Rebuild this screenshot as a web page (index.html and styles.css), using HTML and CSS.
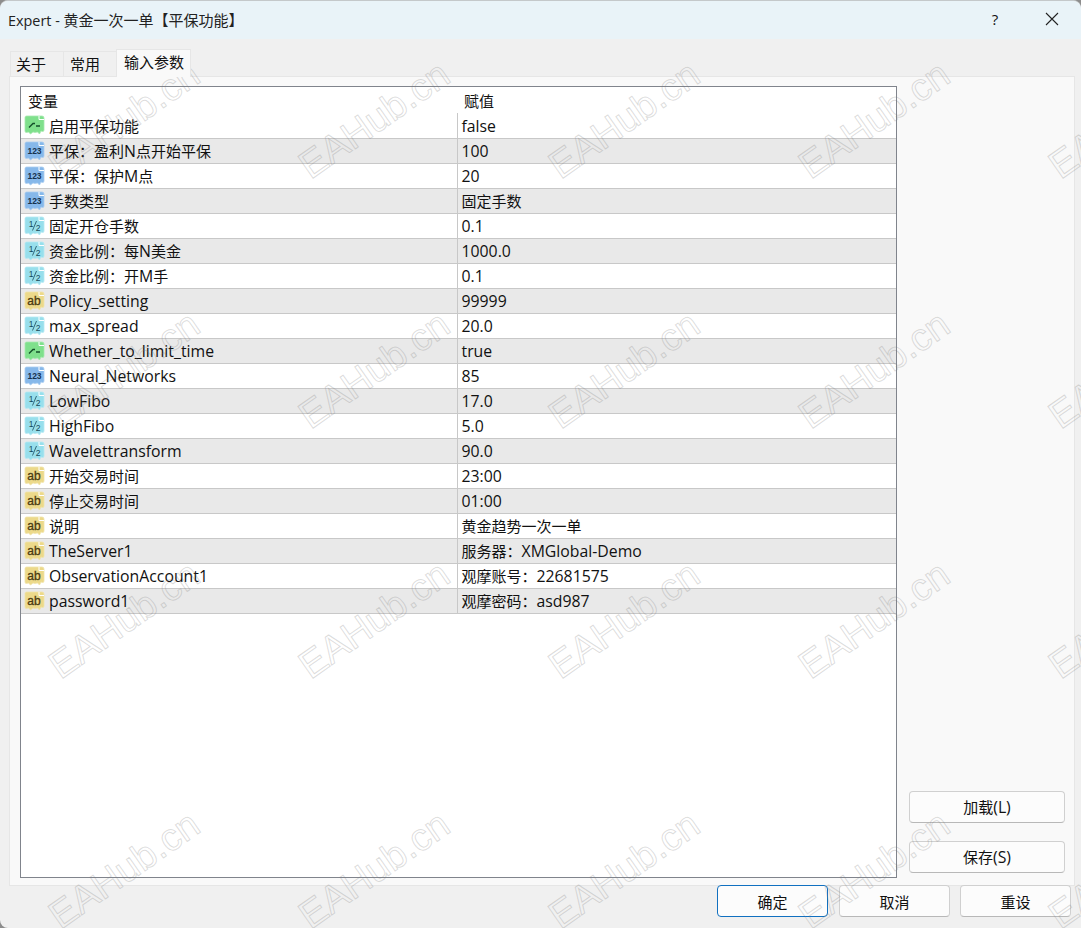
FILE: index.html
```html
<!DOCTYPE html>
<html lang="zh-CN">

<head>
  <meta charset="UTF-8">
  <title>Expert - 黄金一次一单【平保功能】</title>
  <link rel="stylesheet" href="styles.css">
</head>

<body>
  <svg class="defs" width="0" height="0">
    <defs>
      <path id="doc" d="M1 2.500 Q1 1 2.500 1 H14 L18 1 Q20 1 20 3 V15 Q20 16.500 18.500 16.500 L17 16 L15.500 19 L13.500 17 L11 17.500 L9 17 L6.500 19 L4.500 17 L2.500 17.500 Q1 17.500 1 16 Z"/>
      <path id="fold" d="M15 1 V4.500 H20"/>
      <g id="half">
        <text class="hf" x="7" y="10.500">1</text>
        <path d="M8.500 14.500 L12.500 5" stroke="#164a5a" stroke-width="0.8" fill="none"/>
        <text class="hf" x="14" y="14.500">2</text>
      </g>
    </defs>
  </svg>

  <div class="window">
    <div class="titlebar">
      <span class="title"><span class="title-en">Expert - </span>黄金一次一单【平保功能】</span>
      <span class="help">?</span>
      <svg class="close" width="14" height="14" viewBox="0 0 14 14"><path d="M1 1 L13 13 M13 1 L1 13" stroke="#222" stroke-width="1.1" fill="none"/></svg>
    </div>

    <div class="tabs">
      <div class="tab">关于</div>
      <div class="tab">常用</div>
      <div class="tab tab-on">输入参数</div>
    </div>

    <div class="panel">
      <div class="grid-box">
        <table class="params">
          <thead>
            <tr><th class="c1">变量</th><th class="c2">赋值</th></tr>
          </thead>
          <tbody>
            <tr><td class="c1"><div class="name"><svg class="ico ico-bool" viewBox="0 0 21 20"><use href="#doc"/><use class="fold" href="#fold"/><path class="sw" d="M5 12.500 L9 8.500 L11 8.500 M12 11 H16"/></svg><span>启用平保功能</span></div></td><td class="c2 en">false</td></tr>
            <tr><td class="c1"><div class="name"><svg class="ico ico-int" viewBox="0 0 21 20"><use href="#doc"/><use class="fold" href="#fold"/><text x="10.500" y="13">123</text></svg><span>平保：盈利<span class="en">N</span>点开始平保</span></div></td><td class="c2 en">100</td></tr>
            <tr><td class="c1"><div class="name"><svg class="ico ico-int" viewBox="0 0 21 20"><use href="#doc"/><use class="fold" href="#fold"/><text x="10.500" y="13">123</text></svg><span>平保：保护<span class="en">M</span>点</span></div></td><td class="c2 en">20</td></tr>
            <tr><td class="c1"><div class="name"><svg class="ico ico-int" viewBox="0 0 21 20"><use href="#doc"/><use class="fold" href="#fold"/><text x="10.500" y="13">123</text></svg><span>手数类型</span></div></td><td class="c2 zh">固定手数</td></tr>
            <tr><td class="c1"><div class="name"><svg class="ico ico-dbl" viewBox="0 0 21 20"><use href="#doc"/><use class="fold" href="#fold"/><use href="#half"/></svg><span>固定开仓手数</span></div></td><td class="c2 en">0.1</td></tr>
            <tr><td class="c1"><div class="name"><svg class="ico ico-dbl" viewBox="0 0 21 20"><use href="#doc"/><use class="fold" href="#fold"/><use href="#half"/></svg><span>资金比例：每<span class="en">N</span>美金</span></div></td><td class="c2 en">1000.0</td></tr>
            <tr><td class="c1"><div class="name"><svg class="ico ico-dbl" viewBox="0 0 21 20"><use href="#doc"/><use class="fold" href="#fold"/><use href="#half"/></svg><span>资金比例：开<span class="en">M</span>手</span></div></td><td class="c2 en">0.1</td></tr>
            <tr><td class="c1"><div class="name en"><svg class="ico ico-str" viewBox="0 0 21 20"><use href="#doc"/><use class="fold" href="#fold"/><text x="10" y="14">ab</text></svg><span>Policy_setting</span></div></td><td class="c2 en">99999</td></tr>
            <tr><td class="c1"><div class="name en"><svg class="ico ico-dbl" viewBox="0 0 21 20"><use href="#doc"/><use class="fold" href="#fold"/><use href="#half"/></svg><span>max_spread</span></div></td><td class="c2 en">20.0</td></tr>
            <tr><td class="c1"><div class="name en"><svg class="ico ico-bool" viewBox="0 0 21 20"><use href="#doc"/><use class="fold" href="#fold"/><path class="sw" d="M5 12.500 L9 8.500 L11 8.500 M12 11 H16"/></svg><span>Whether_to_limit_time</span></div></td><td class="c2 en">true</td></tr>
            <tr><td class="c1"><div class="name en"><svg class="ico ico-int" viewBox="0 0 21 20"><use href="#doc"/><use class="fold" href="#fold"/><text x="10.500" y="13">123</text></svg><span>Neural_Networks</span></div></td><td class="c2 en">85</td></tr>
            <tr><td class="c1"><div class="name en"><svg class="ico ico-dbl" viewBox="0 0 21 20"><use href="#doc"/><use class="fold" href="#fold"/><use href="#half"/></svg><span>LowFibo</span></div></td><td class="c2 en">17.0</td></tr>
            <tr><td class="c1"><div class="name en"><svg class="ico ico-dbl" viewBox="0 0 21 20"><use href="#doc"/><use class="fold" href="#fold"/><use href="#half"/></svg><span>HighFibo</span></div></td><td class="c2 en">5.0</td></tr>
            <tr><td class="c1"><div class="name en"><svg class="ico ico-dbl" viewBox="0 0 21 20"><use href="#doc"/><use class="fold" href="#fold"/><use href="#half"/></svg><span>Wavelettransform</span></div></td><td class="c2 en">90.0</td></tr>
            <tr><td class="c1"><div class="name"><svg class="ico ico-str" viewBox="0 0 21 20"><use href="#doc"/><use class="fold" href="#fold"/><text x="10" y="14">ab</text></svg><span>开始交易时间</span></div></td><td class="c2 en">23:00</td></tr>
            <tr><td class="c1"><div class="name"><svg class="ico ico-str" viewBox="0 0 21 20"><use href="#doc"/><use class="fold" href="#fold"/><text x="10" y="14">ab</text></svg><span>停止交易时间</span></div></td><td class="c2 en">01:00</td></tr>
            <tr><td class="c1"><div class="name"><svg class="ico ico-str" viewBox="0 0 21 20"><use href="#doc"/><use class="fold" href="#fold"/><text x="10" y="14">ab</text></svg><span>说明</span></div></td><td class="c2 zh">黄金趋势一次一单</td></tr>
            <tr><td class="c1"><div class="name en"><svg class="ico ico-str" viewBox="0 0 21 20"><use href="#doc"/><use class="fold" href="#fold"/><text x="10" y="14">ab</text></svg><span>TheServer1</span></div></td><td class="c2">服务器：<span class="en">XMGlobal-Demo</span></td></tr>
            <tr><td class="c1"><div class="name en"><svg class="ico ico-str" viewBox="0 0 21 20"><use href="#doc"/><use class="fold" href="#fold"/><text x="10" y="14">ab</text></svg><span>ObservationAccount1</span></div></td><td class="c2">观摩账号：<span class="en">22681575</span></td></tr>
            <tr><td class="c1"><div class="name en"><svg class="ico ico-str" viewBox="0 0 21 20"><use href="#doc"/><use class="fold" href="#fold"/><text x="10" y="14">ab</text></svg><span>password1</span></div></td><td class="c2">观摩密码：<span class="en">asd987</span></td></tr>
          </tbody>
        </table>
      </div>
      <div class="side">
        <button class="btn btn-side">加载<span class="en">(L)</span></button>
        <button class="btn btn-side">保存<span class="en">(S)</span></button>
      </div>
    </div>

    <div class="footer">
      <button class="btn btn-foot btn-default">确定</button>
      <button class="btn btn-foot">取消</button>
      <button class="btn btn-foot">重设</button>
    </div>
  </div>

  <!-- 水印 -->
  <div class="marks">
    <span class="mark r1 k1">EAHub.cn</span><span class="mark r1 k2">EAHub.cn</span><span class="mark r1 k3">EAHub.cn</span><span class="mark r1 k4">EAHub.cn</span><span class="mark r1 k5">EAHub.cn</span>
    <span class="mark r2 k1">EAHub.cn</span><span class="mark r2 k2">EAHub.cn</span><span class="mark r2 k3">EAHub.cn</span><span class="mark r2 k4">EAHub.cn</span><span class="mark r2 k5">EAHub.cn</span>
    <span class="mark r3 k1">EAHub.cn</span><span class="mark r3 k2">EAHub.cn</span><span class="mark r3 k3">EAHub.cn</span><span class="mark r3 k4">EAHub.cn</span><span class="mark r3 k5">EAHub.cn</span>
    <span class="mark r4 k1">EAHub.cn</span><span class="mark r4 k2">EAHub.cn</span><span class="mark r4 k3">EAHub.cn</span><span class="mark r4 k4">EAHub.cn</span><span class="mark r4 k5">EAHub.cn</span>
  </div>
</body>

</html>
```

FILE: styles.css
```css
* {
  margin: 0;
  padding: 0;
  box-sizing: border-box;
}
html, body {
  width: 1081px;
  height: 928px;
  overflow: hidden;
  background: #8d8d8d;
}
body {
  position: relative;
  font-family: "Open Sans", "Noto Sans CJK SC", sans-serif;
  font-size: 15px;
  color: #111;
}
.defs {
  position: absolute;
}
.en {
  font-size: 15.8px;
}

.window {
  height: 928px;
  background: #f0f0f0;
  border-radius: 8px 8px 0 8px;
  border-top: 1px solid #c4c8ca;
  display: flex;
  flex-direction: column;
}

/* 标题栏 */
.titlebar {
  height: 38px;
  flex: none;
  display: flex;
  align-items: center;
  padding: 0 22px 2px 8px;
  background: #e9f3f8;
  border-radius: 8px 8px 0 0;
}
.title {
  flex: 1;
  font-size: 15px;
  color: #222;
}
.title-en {
  font-size: 14.4px;
}
.help {
  width: 14px;
  margin-right: 43px;
  text-align: center;
  font-size: 15px;
}

/* 选项卡 */
.tabs {
  height: 37px;
  flex: none;
  display: flex;
  align-items: flex-end;
  padding: 10px 0 0 10px;
  position: relative;
  z-index: 1;
}
.tab {
  width: 53px;
  height: 25px;
  padding-left: 5px;
  line-height: 25px;
  background: #f0f0f0;
  border: 1px solid #e6e6e6;
  border-bottom: 0;
  border-right: 0;
}
.tab:nth-child(2) {
  padding-left: 6px;
}
.tab-on {
  width: 75px;
  height: 28px;
  padding-left: 7px;
  line-height: 25px;
  background: #f9f9f9;
  border-right: 1px solid #e6e6e6;
  margin-bottom: -1px;
}

/* 主面板 */
.panel {
  height: 810px;
  flex: none;
  margin: 0 6px 0 9px;
  padding: 9px 10px 6px 10px;
  background: #f9f9f9;
  border: 1px solid #e6e6e6;
  display: flex;
}
.grid-box {
  width: 877px;
  height: 792px;
  flex: none;
  background: #fff;
  border: 1px solid #80848c;
}
.params {
  width: 875px;
  border-collapse: collapse;
  table-layout: fixed;
}
.params th {
  height: 26px;
  font-weight: 400;
  text-align: left;
  padding: 0 0 0 7px;
}
.params td {
  height: 25px;
  padding: 0;
  border-bottom: 1px solid #c8c8c8;
}
.params tbody tr:nth-child(even) td {
  background: #e9e9e9;
}
.c1 {
  width: 436px;
}
td.c1 {
  padding-left: 3px;
}
td.c2 {
  padding: 1px 0 0 4px;
  border-left: 1px solid #c8c8c8;
}
td.zh {
  padding-top: 0;
}
.name {
  display: flex;
  align-items: center;
  gap: 4px;
}

/* 小图标 */
.ico {
  width: 21px;
  height: 20px;
  flex: none;
}
.ico > use {
  stroke-width: 0.8;
}
.ico .fold {
  fill: none;
  stroke: #ffffff;
  stroke-width: 1;
}
.ico text {
  font-family: "Liberation Sans", sans-serif;
  font-size: 8.500px;
  font-weight: 700;
  text-anchor: middle;
  fill: #17324f;
  stroke: none;
}
.ico-str text {
  font-size: 12px;
  font-weight: 400;
  fill: #4a3a10;
  stroke: #4a3a10;
  stroke-width: 0.3;
}
.hf {
  font-family: "Liberation Sans", sans-serif;
  font-size: 8.500px;
  text-anchor: middle;
  fill: #164a5a;
  stroke: none;
}
.ico-bool { fill: #7fe08c; stroke: #a6e8ae; }
.ico-int { fill: #86b8ea; stroke: #a9cdf0; }
.ico-dbl { fill: #98dfec; stroke: #b5e8f2; }
.ico-str { fill: #ecd98a; stroke: #f0e3a8; }
.sw {
  fill: none;
  stroke: #14502a;
  stroke-width: 1.400;
}

/* 右侧按钮 */
.side {
  width: 156px;
  margin-left: 12px;
  padding-top: 705px;
  display: flex;
  flex-direction: column;
  gap: 18px;
  flex: none;
}
.btn {
  font: inherit;
  color: #111;
  background: #fcfcfc;
  border: 1px solid #d0d0d0;
  border-bottom-color: #b8b8b8;
  border-radius: 4px;
}
.btn-side {
  height: 32px;
}

/* 底部按钮 */
.footer {
  height: 43px;
  flex: none;
  display: flex;
  justify-content: flex-end;
  gap: 10px;
  margin-top: -1px;
  padding: 0 10px 0 0;
  position: relative;
}
.btn-foot {
  width: 111px;
  height: 32px;
}
.btn-default {
  border: 1px solid #1170c0;
  margin-right: 1px;
}

/* 水印 */
.marks {
  position: absolute;
  left: 0;
  top: 0;
  width: 1081px;
  height: 928px;
  overflow: hidden;
  pointer-events: none;
}
.mark {
  position: absolute;
  transform: rotate(-35deg);
  transform-origin: left bottom;
  font-family: "Liberation Sans", sans-serif;
  font-size: 38.500px;
  line-height: 39px;
  white-space: nowrap;
  color: transparent;
  -webkit-text-stroke: 1px rgba(120, 120, 120, 0.26);
}
.r1 { top: 146px; }
.r2 { top: 396px; }
.r3 { top: 646px; }
.r4 { top: 896px; }
.k1 { left: 64px; }
.k2 { left: 314px; }
.k3 { left: 564px; }
.k4 { left: 814px; }
.k5 { left: 1064px; }
```
